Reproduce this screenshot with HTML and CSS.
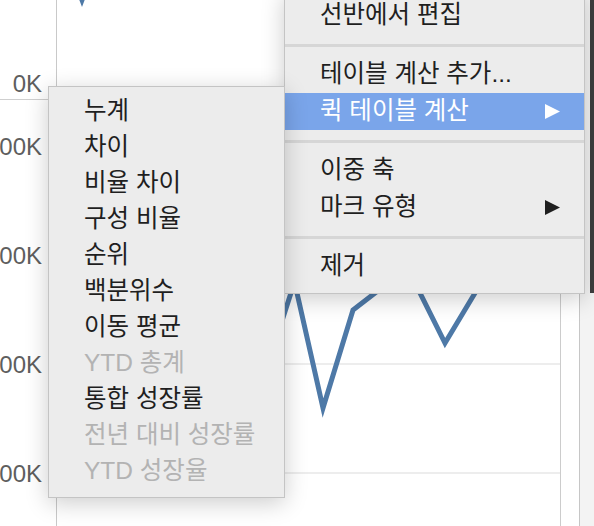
FILE: index.html
```html
<!DOCTYPE html>
<html lang="ko">
<head>
<meta charset="utf-8">
<link rel="stylesheet" href="styles.css">
</head>
<body>
<div class="screen">
  <div class="chart">
    <div class="axis">
      <div class="axis-pane top"><span class="tick">0K</span></div>
      <div class="axis-pane bottom">
        <span class="tick">00K</span>
        <span class="tick">00K</span>
        <span class="tick">00K</span>
        <span class="tick">00K</span>
      </div>
    </div>
    <div class="plot">
      <svg class="plot-svg" width="503" height="526" viewBox="57 0 503 526">
        <line class="divider" x1="57" y1="100.5" x2="560" y2="100.5"/>
        <line class="grid" x1="57" y1="146" x2="560" y2="146"/>
        <line class="grid" x1="57" y1="255" x2="560" y2="255"/>
        <line class="grid" x1="57" y1="364" x2="560" y2="364"/>
        <line class="grid" x1="57" y1="473" x2="560" y2="473"/>
        <polyline class="series" points="76,-16 82,0 88,-16"/>
        <polyline class="series" points="250,420 270,358 294.5,282 323,408 353,310 375,293 392,281 408.5,270 445,343 488.8,270 520,240"/>
      </svg>
    </div>
    <div class="gutter"></div>
    <div class="side"></div>
  </div>

  <div class="edge"></div>

  <div class="menu main-menu">
    <div class="item">선반에서 편집</div>
    <div class="sep"></div>
    <div class="item">테이블 계산 추가...</div>
    <div class="item active"><span>퀵 테이블 계산</span>
      <svg class="arrow" width="15" height="15" viewBox="0 0 15 15"><polygon points="0,0 15,7.5 0,15"/></svg>
    </div>
    <div class="sep"></div>
    <div class="item">이중 축</div>
    <div class="item"><span>마크 유형</span>
      <svg class="arrow" width="15" height="15" viewBox="0 0 15 15"><polygon points="0,0 15,7.5 0,15"/></svg>
    </div>
    <div class="sep"></div>
    <div class="item">제거</div>
  </div>

  <div class="menu sub-menu">
    <div class="item">누계</div>
    <div class="item">차이</div>
    <div class="item">비율 차이</div>
    <div class="item">구성 비율</div>
    <div class="item">순위</div>
    <div class="item">백분위수</div>
    <div class="item">이동 평균</div>
    <div class="item disabled">YTD 총계</div>
    <div class="item">통합 성장률</div>
    <div class="item disabled">전년 대비 성장률</div>
    <div class="item disabled">YTD 성장율</div>
  </div>
</div>
</body>
</html>
```
FILE: styles.css
```css
html, body {
  margin: 0;
  padding: 0;
  background: #ffffff;
}

.screen {
  position: relative;
  width: 594px;
  height: 526px;
  overflow: hidden;
  font-family: "Liberation Sans", "Noto Sans CJK KR", sans-serif;
}

.chart {
  display: grid;
  grid-template-columns: 57px 504px 19px 14px;
  height: 526px;
}

.axis {
  border-right: 1px solid #c9c9c9;
  display: flex;
  flex-direction: column;
}

.axis-pane {
  display: flex;
  flex-direction: column;
  align-items: flex-end;
  padding-right: 14px;
}

.axis-pane.top {
  height: 100px;
  border-bottom: 1px solid #cfcfcf;
  justify-content: flex-end;
  padding-bottom: 3px;
  box-sizing: border-box;
}

.axis-pane.bottom {
  padding-top: 35px;
  gap: 85px;
}

.tick {
  font-size: 24px;
  line-height: 24px;
  height: 24px;
  color: #5e5e5e;
}

.plot {
  border-right: 1px solid #cccccc;
  overflow: hidden;
}

.plot-svg {
  display: block;
}

.divider {
  stroke: #d2d2d2;
  stroke-width: 1;
}

.grid {
  stroke: #ededed;
  stroke-width: 2;
}

.series {
  fill: none;
  stroke: #4e79a7;
  stroke-width: 5;
  stroke-linejoin: miter;
}

.gutter {
  border-right: 1px solid #c6c6c6;
}

.side {
  background: #f3f3f3;
}

.edge {
  position: absolute;
  left: 590px;
  top: 0;
  width: 4px;
  height: 293px;
  background: #3e3e3e;
}

.menu {
  position: absolute;
  background: #ececec;
  border: 1px solid #c4c4c4;
  box-sizing: border-box;
  box-shadow: 0 5px 22px rgba(0, 0, 0, 0.2);
  color: #1f1f1f;
  font-size: 24.5px;
}

.main-menu {
  left: 284px;
  top: -10px;
  width: 301px;
  padding: 6px 0 8px;
}

.sub-menu {
  left: 48px;
  top: 86px;
  width: 237px;
  padding: 6px 0 8px;
  z-index: 2;
}

.item {
  display: flex;
  align-items: center;
  justify-content: space-between;
  padding: 0 24px 6px 35px;
  box-sizing: border-box;
  white-space: nowrap;
}

.item .arrow {
  margin-top: 6px;
}

.main-menu .item {
  height: 37px;
}

.sub-menu .item {
  height: 36px;
}

.item.active {
  background: #7aa5ea;
  color: #ffffff;
}

.item.disabled {
  color: #b3b3b3;
}

.arrow {
  fill: currentColor;
  display: block;
}

.sep {
  height: 3px;
  background: #d6d6d6;
  margin: 10px 0 9px;
}
```
